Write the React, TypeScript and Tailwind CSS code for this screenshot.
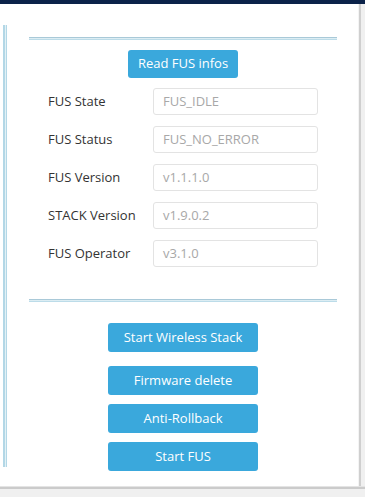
import React from "react";

const fields: { label: string; value: string }[] = [
  { label: "FUS State", value: "FUS_IDLE" },
  { label: "FUS Status", value: "FUS_NO_ERROR" },
  { label: "FUS Version", value: "v1.1.1.0" },
  { label: "STACK Version", value: "v1.9.0.2" },
  { label: "FUS Operator", value: "v3.1.0" },
];

const actions = ["Start Wireless Stack", "Firmware delete", "Anti-Rollback", "Start FUS"];

function Divider() {
  return (
    <div className="flex w-full flex-col">
      <div className="h-px bg-[#a9c9d8]" />
      <div className="h-px bg-[#dcedf3]" />
      <div className="h-px bg-[#bcdce9]" />
    </div>
  );
}

export default function App() {
  return (
    <div
      className="flex h-[497px] w-[365px] flex-col overflow-hidden bg-white text-[13px] text-[#333]"
      style={{ fontFamily: '"Open Sans", "Noto Sans", sans-serif' }}
    >
      <div className="h-[4px] bg-[#0b2249]" />

      <div className="flex h-[482px] flex-row">
        <div className="flex flex-1 flex-row pl-[3px]">
          {/* left double rail */}
          <div className="mt-[21px] flex h-[442px] w-[4px] flex-row">
            <div className="w-[2px] bg-[#b3d7e6]" />
            <div className="w-px bg-[#e2f1f6]" />
            <div className="w-px bg-[#b3d7e6]" />
          </div>

          <div className="ml-[22px] flex w-[308px] flex-col items-center pt-[33px]">
            <Divider />

            <button className="mt-[10px] h-[28px] w-[110px] rounded-[3px] bg-[#3aa8dc] text-white">
              Read FUS infos
            </button>

            <div className="mt-[10px] flex w-full flex-col gap-[11px] px-[19px]">
              {fields.map((f) => (
                <div key={f.label} className="flex h-[27px] flex-row items-center">
                  <div className="w-[105px]">{f.label}</div>
                  <div className="flex h-[27px] flex-1 items-center rounded-[3px] border border-[#e3e3e3] px-[9px] text-[#a8a8a8]">
                    {f.value}
                  </div>
                </div>
              ))}
            </div>

            <div className="mt-[32px] w-full">
              <Divider />
            </div>

            <div className="mt-[21px] flex flex-col items-center">
              {actions.map((a, i) => (
                <button
                  key={a}
                  className={
                    "h-[29px] w-[150px] rounded-[3px] bg-[#3aa8dc] text-white " +
                    (i === 0 ? "" : i === 1 ? "mt-[14px]" : "mt-[9px]")
                  }
                >
                  {a}
                </button>
              ))}
            </div>
          </div>
        </div>

        {/* right frame */}
        <div className="flex w-[7px] flex-row">
          <div className="w-px bg-[#f4f4f4]" />
          <div className="w-[2px] bg-[#cfcfcf]" />
          <div className="flex-1 bg-[#f0f0f0]" />
        </div>
      </div>

      <div className="h-px bg-[#e4e4e4]" />
      <div className="h-[2px] bg-[#cbcbcb]" />
      <div className="flex-1 bg-[#f0f0f0]" />
    </div>
  );
}
